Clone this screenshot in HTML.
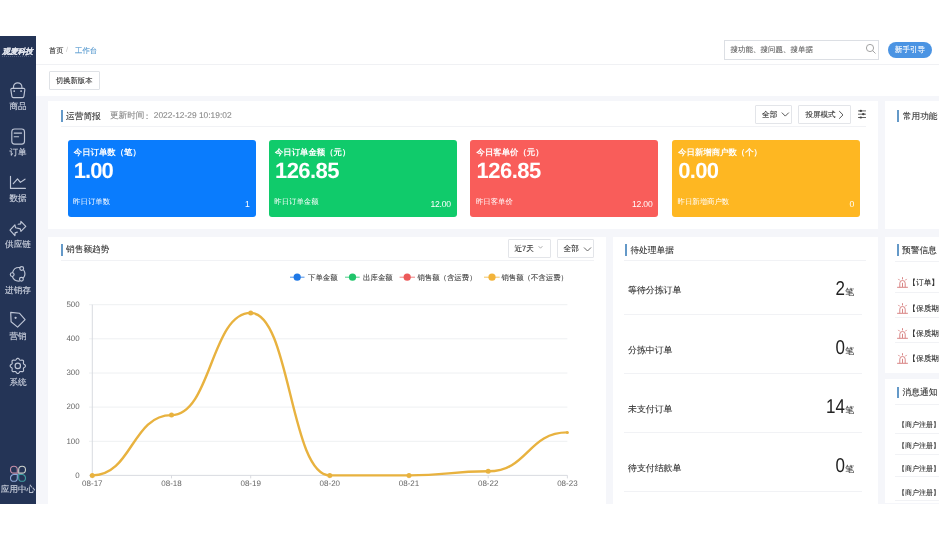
<!DOCTYPE html>
<html><head><meta charset="utf-8">
<style>
*{margin:0;padding:0;box-sizing:border-box;}
html,body{width:939px;height:540px;overflow:hidden;background:#fff;font-family:"Liberation Sans",sans-serif;color:#333;text-rendering:geometricPrecision;}
.a{position:absolute;}
.t{position:absolute;white-space:nowrap;line-height:1;-webkit-text-stroke:0.1px currentColor;}
#side{left:0;top:36px;width:36px;height:467.5px;background:#243456;}
#bg{left:36px;top:95.5px;width:903px;height:408px;background:#f5f6fa;}
.card{position:absolute;background:#fff;}
.bar{position:absolute;width:2.2px;background:#6499c8;}
.title{position:absolute;font-size:8.7px;color:#333;line-height:1;white-space:nowrap;-webkit-text-stroke:0.1px currentColor;}
.hl{position:absolute;height:1px;background:#f1f2f5;}
.stat{position:absolute;width:188px;height:77.9px;border-radius:3px;color:#fff;}
.stat .s1{position:absolute;left:6.3px;top:8px;font-size:8.4px;font-weight:bold;line-height:1;white-space:nowrap;}
.stat .s2{position:absolute;left:6.3px;top:20.6px;font-size:22px;letter-spacing:-0.95px;font-weight:bold;line-height:1;white-space:nowrap;}
.stat .s3{position:absolute;left:5.6px;top:58.7px;font-size:7.4px;line-height:1;white-space:nowrap;}
.stat .s4{position:absolute;right:5.8px;top:60.2px;font-size:8.6px;letter-spacing:-0.2px;line-height:1;white-space:nowrap;}
.sel{position:absolute;border:1px solid #e3e5e9;background:#fff;border-radius:1px;}
.nav{position:absolute;left:0;width:36px;text-align:center;color:#c9cfdc;font-size:8.6px;line-height:1;white-space:nowrap;-webkit-text-stroke:0.15px #c9cfdc;}
.navi{position:absolute;}
#wrap{position:absolute;left:0;top:0;width:939px;height:540px;filter:blur(0.4px);}
</style></head><body><div id="wrap">
<div id="side" class="a"></div>
<div id="bg" class="a"></div>

<!-- header -->
<div class="t" style="left:49px;top:46.8px;font-size:7.2px;color:#333;">首页</div><div class="t" style="left:66px;top:46.8px;font-size:7px;color:#ccc;">/</div><div class="t" style="left:75px;top:46.8px;font-size:7.4px;color:#5a9bd0;">工作台</div>
<div class="a" style="left:724px;top:40px;width:155px;height:20px;border:1px solid #dcdfe4;background:#fff;"></div>
<div class="t" style="left:730.6px;top:45.8px;font-size:7.5px;color:#666;">搜功能、搜问题、搜单据</div>
<svg class="a" style="left:865px;top:43px" width="12" height="12" viewBox="0 0 12 12"><circle cx="5" cy="5" r="3.6" fill="none" stroke="#999" stroke-width="0.9"/><line x1="7.6" y1="7.6" x2="10.5" y2="10.5" stroke="#999" stroke-width="0.9"/></svg>
<div class="a" style="left:888px;top:42px;width:44px;height:15.5px;border-radius:8px;background:#4b94e3;"></div>
<div class="t" style="left:894.8px;top:46.2px;font-size:7.6px;color:#fff;">新手引导</div>
<div class="hl" style="left:36px;top:64px;width:903px;background:#f0f1f4;"></div>
<div class="a" style="left:48.5px;top:71px;width:51.5px;height:19px;border:1px solid #dfe2e6;background:#fff;border-radius:1px;"></div>
<div class="t" style="left:55.8px;top:77.4px;font-size:7.35px;color:#333;">切换新版本</div>

<!-- card 1 -->
<div class="card" style="left:48.3px;top:101.3px;width:829.7px;height:128.2px;"></div>
<div class="bar" style="left:61px;top:110px;height:12px;"></div>
<div class="title" style="left:66px;top:111.5px;">运营简报</div>
<div class="t" style="left:110px;top:111.3px;font-size:8.6px;color:#888;">更新时间</div><div class="t" style="left:142.8px;top:112px;font-size:8.6px;color:#888;">：</div><div class="t" style="left:153.8px;top:111.3px;font-size:8.4px;color:#888;">2022-12-29 10:19:02</div>
<div class="hl" style="left:61px;top:126px;width:805px;"></div>
<div class="sel" style="left:755px;top:105.2px;width:37px;height:18.6px;"></div>
<div class="t" style="left:762px;top:111.3px;font-size:7.7px;color:#333;">全部</div>
<svg class="a" style="left:780.5px;top:111px" width="9" height="7" viewBox="0 0 9 7"><polyline points="0.8,1.6 4.3,5.1 7.8,1.6" fill="none" stroke="#444" stroke-width="0.9"/></svg>
<div class="sel" style="left:798px;top:105.2px;width:53.3px;height:18.6px;"></div>
<div class="t" style="left:805.5px;top:111.3px;font-size:7.5px;color:#333;">投屏模式</div>
<svg class="a" style="left:838px;top:110px" width="7" height="10" viewBox="0 0 7 10"><polyline points="1.2,1.1 5,4.9 1.2,8.7" fill="none" stroke="#444" stroke-width="0.9"/></svg>
<svg class="a" style="left:856px;top:108px" width="12" height="12" viewBox="0 0 12 12"><g stroke="#555" stroke-width="0.9"><line x1="2" y1="2.9" x2="10" y2="2.9"/><line x1="2" y1="6.2" x2="10" y2="6.2"/><line x1="2" y1="9.5" x2="10" y2="9.5"/></g><g fill="#444"><ellipse cx="4.8" cy="2.9" rx="1.3" ry="1.1"/><ellipse cx="7.3" cy="6.2" rx="1.3" ry="1.1"/><ellipse cx="4.8" cy="9.5" rx="1.3" ry="1.1"/></g></svg>

<div class="stat" style="left:67.5px;top:139.6px;background:#0a7cfd;">
 <div class="s1">今日订单数（笔）</div><div class="s2">1.00</div><div class="s3">昨日订单数</div><div class="s4">1</div></div>
<div class="stat" style="left:268.7px;top:139.6px;background:#10cb6b;">
 <div class="s1">今日订单金额（元）</div><div class="s2" style="letter-spacing:-0.55px">126.85</div><div class="s3">昨日订单金额</div><div class="s4">12.00</div></div>
<div class="stat" style="left:470.3px;top:139.6px;background:#f95d5a;">
 <div class="s1">今日客单价（元）</div><div class="s2" style="letter-spacing:-0.55px">126.85</div><div class="s3">昨日客单价</div><div class="s4">12.00</div></div>
<div class="stat" style="left:671.9px;top:139.6px;background:#feb722;">
 <div class="s1">今日新增商户数（个）</div><div class="s2" style="letter-spacing:-0.7px">0.00</div><div class="s3">昨日新增商户数</div><div class="s4">0</div></div>

<!-- right card 常用功能 -->
<div class="card" style="left:885px;top:101.3px;width:54px;height:128.2px;"></div>
<div class="bar" style="left:896.9px;top:110px;height:11.5px;"></div>
<div class="title" style="left:902.8px;top:111.5px;">常用功能</div>

<!-- chart card -->
<div class="card" style="left:48.3px;top:236.5px;width:558.2px;height:267px;"></div>
<div class="bar" style="left:61px;top:243.5px;height:12px;"></div>
<div class="title" style="left:66px;top:245px;">销售额趋势</div>
<div class="hl" style="left:61px;top:260px;width:533px;"></div>
<div class="sel" style="left:508.2px;top:239.3px;width:42.4px;height:18.3px;"></div>
<div class="t" style="left:514.5px;top:244.5px;font-size:7.6px;color:#333;">近7天</div>
<svg class="a" style="left:537px;top:244px" width="7" height="6" viewBox="0 0 7 6"><polyline points="1.6,2.2 3.5,4.2 5.4,2.2" fill="none" stroke="#999" stroke-width="0.8"/></svg>
<div class="sel" style="left:557.4px;top:239.3px;width:36.3px;height:18.5px;"></div>
<div class="t" style="left:563.6px;top:245.3px;font-size:7.6px;color:#333;">全部</div>
<svg class="a" style="left:583px;top:245.5px" width="9" height="7" viewBox="0 0 9 7"><polyline points="1,1.5 4.5,5 8,1.5" fill="none" stroke="#555" stroke-width="0.9"/></svg>

<svg class="a" style="left:0;top:0" width="939" height="540" viewBox="0 0 939 540">
 <g stroke="#eef0f2" stroke-width="1">
  <line x1="89" y1="304.7" x2="567.4" y2="304.7"/>
  <line x1="89" y1="338.8" x2="567.4" y2="338.8"/>
  <line x1="89" y1="373.0" x2="567.4" y2="373.0"/>
  <line x1="89" y1="407.1" x2="567.4" y2="407.1"/>
  <line x1="89" y1="441.3" x2="567.4" y2="441.3"/>
 </g>
 <line x1="92.3" y1="304.7" x2="92.3" y2="475.4" stroke="#d5d7dc" stroke-width="0.9"/>
 <line x1="89" y1="475.4" x2="567.4" y2="475.4" stroke="#d5d7dc" stroke-width="0.9"/>
 <g stroke="#d5d7dc" stroke-width="0.9">
  <line x1="92.3" y1="475.4" x2="92.3" y2="478.4"/>  <line x1="171.5" y1="475.4" x2="171.5" y2="478.4"/>  <line x1="250.7" y1="475.4" x2="250.7" y2="478.4"/>  <line x1="329.8" y1="475.4" x2="329.8" y2="478.4"/>  <line x1="409" y1="475.4" x2="409" y2="478.4"/>  <line x1="488.2" y1="475.4" x2="488.2" y2="478.4"/>  <line x1="567.4" y1="475.4" x2="567.4" y2="478.4"/>
 </g>
 <g font-family="Liberation Sans" font-size="7.9" fill="#666" text-anchor="end">
  <text x="79.6" y="306.9">500</text><text x="79.6" y="341.0">400</text><text x="79.6" y="375.2">300</text><text x="79.6" y="409.3">200</text><text x="79.6" y="443.5">100</text><text x="79.6" y="477.6">0</text>
 </g>
 <g font-family="Liberation Sans" font-size="8" fill="#666" text-anchor="middle">
  <text x="92.3" y="486.4">08-17</text><text x="171.5" y="486.4">08-18</text><text x="250.7" y="486.4">08-19</text><text x="329.8" y="486.4">08-20</text><text x="409" y="486.4">08-21</text><text x="488.2" y="486.4">08-22</text><text x="567.4" y="486.4">08-23</text>
 </g>
 <path d="M92.3,475.4 C131.9,475.4 131.9,415.1 171.5,415.1 C211.1,415.1 211.1,312.9 250.7,312.9 C290.2,312.9 290.2,475.4 329.8,475.4 C369.4,475.4 369.4,475.4 409.0,475.4 C448.6,475.4 448.6,471.3 488.2,471.3 C527.8,471.3 527.8,432.4 567.4,432.4" fill="none" stroke="#e8b23f" stroke-width="2.4"/>
 <g fill="#e8b23f">
  <circle cx="92.3" cy="475.4" r="2.5"/><circle cx="171.5" cy="415.1" r="2.5"/><circle cx="250.7" cy="312.9" r="2.5"/><circle cx="329.8" cy="475.4" r="2.5"/><circle cx="409" cy="475.4" r="2.5"/><circle cx="488.2" cy="471.3" r="2.5"/><circle cx="567.4" cy="432.4" r="1.5"/>
 </g>
 <!-- legend -->
 <g stroke-width="1">
  <line x1="290" y1="277.2" x2="304.5" y2="277.2" stroke="#4a90e8"/><circle cx="297.2" cy="277.2" r="3.6" fill="#1f78e6"/>
  <line x1="345" y1="277.2" x2="359.7" y2="277.2" stroke="#4ccf88"/><circle cx="352.5" cy="277.2" r="3.6" fill="#1fc46a"/>
  <line x1="399.6" y1="277.2" x2="415" y2="277.2" stroke="#ef8080"/><circle cx="407.2" cy="277.2" r="3.6" fill="#ec5a5a"/>
  <line x1="484" y1="277.2" x2="499.7" y2="277.2" stroke="#f3c462"/><circle cx="492" cy="277.2" r="3.6" fill="#f2b33a"/>
 </g>
</svg>
<div class="t" style="left:308.0px;top:273.7px;font-size:7.4px;color:#444;">下单金额</div>
<div class="t" style="left:363.09999999999997px;top:273.7px;font-size:7.4px;color:#444;">出库金额</div>
<div class="t" style="left:417.4px;top:273.7px;font-size:7.4px;color:#444;">销售额（含运费）</div>
<div class="t" style="left:501.4px;top:273.7px;font-size:7.4px;color:#444;">销售额（不含运费）</div>

<!-- 待处理单据 -->
<div class="card" style="left:612.6px;top:236.5px;width:265.4px;height:267px;"></div>
<div class="bar" style="left:625px;top:244px;height:11.5px;"></div>
<div class="title" style="left:630.4px;top:245.5px;">待处理单据</div>
<div class="hl" style="left:624px;top:260px;width:242px;"></div>
<div class="t" style="left:628px;top:286.3px;font-size:8.9px;color:#333;">等待分拣订单</div>
<div class="t" style="left:785px;width:60px;text-align:right;top:278.9px;font-size:20px;color:#222;-webkit-text-stroke:0;transform:scaleX(0.85);transform-origin:right center;">2</div><div class="t" style="left:845.2px;top:287.9px;font-size:8.9px;color:#333;">笔</div>
<div class="hl" style="left:624px;top:313.5px;width:238px;"></div>
<div class="t" style="left:628px;top:345.8px;font-size:8.9px;color:#333;">分拣中订单</div>
<div class="t" style="left:785px;width:60px;text-align:right;top:337.9px;font-size:20px;color:#222;-webkit-text-stroke:0;transform:scaleX(0.85);transform-origin:right center;">0</div><div class="t" style="left:845.2px;top:346.9px;font-size:8.9px;color:#333;">笔</div>
<div class="hl" style="left:624px;top:373px;width:238px;"></div>
<div class="t" style="left:628px;top:405.3px;font-size:8.9px;color:#333;">未支付订单</div>
<div class="t" style="left:785px;width:60px;text-align:right;top:396.9px;font-size:20px;color:#222;-webkit-text-stroke:0;transform:scaleX(0.85);transform-origin:right center;">14</div><div class="t" style="left:845.2px;top:405.9px;font-size:8.9px;color:#333;">笔</div>
<div class="hl" style="left:624px;top:431.5px;width:238px;"></div>
<div class="t" style="left:628px;top:463.8px;font-size:8.9px;color:#333;">待支付结款单</div>
<div class="t" style="left:785px;width:60px;text-align:right;top:455.9px;font-size:20px;color:#222;-webkit-text-stroke:0;transform:scaleX(0.85);transform-origin:right center;">0</div><div class="t" style="left:845.2px;top:464.9px;font-size:8.9px;color:#333;">笔</div>
<div class="hl" style="left:624px;top:490.5px;width:238px;"></div>

<!-- 预警信息 -->
<div class="card" style="left:885px;top:236.5px;width:54px;height:136.3px;"></div>
<div class="bar" style="left:896.9px;top:244px;height:11.5px;"></div>
<div class="title" style="left:902px;top:245.5px;">预警信息</div>
<div class="hl" style="left:895px;top:260.5px;width:44px;"></div>
<svg class="a" style="left:897.3px;top:277.1px" width="11" height="11" viewBox="0 0 11 11"><g fill="none" stroke="#d98585" stroke-width="1" stroke-linecap="round"><path d="M2.8,10 V6.2 A2.7,2.7 0 0 1 8.2,6.2 V10 M0.5,10.3 H10.5 M5.5,0.6 V2 M1.6,2.2 L2.5,3.1 M9.4,2.2 L8.5,3.1 M5.5,6.2 V9.6"/></g></svg>
<div class="t" style="left:908.3px;top:279px;font-size:7.7px;color:#333;">【订单】 </div>
<div class="hl" style="left:895px;top:291.5px;width:44px;"></div>
<svg class="a" style="left:897.3px;top:302.6px" width="11" height="11" viewBox="0 0 11 11"><g fill="none" stroke="#d98585" stroke-width="1" stroke-linecap="round"><path d="M2.8,10 V6.2 A2.7,2.7 0 0 1 8.2,6.2 V10 M0.5,10.3 H10.5 M5.5,0.6 V2 M1.6,2.2 L2.5,3.1 M9.4,2.2 L8.5,3.1 M5.5,6.2 V9.6"/></g></svg>
<div class="t" style="left:908.3px;top:304.5px;font-size:7.7px;color:#333;">【保质期</div>
<div class="hl" style="left:895px;top:317.0px;width:44px;"></div>
<svg class="a" style="left:897.3px;top:327.6px" width="11" height="11" viewBox="0 0 11 11"><g fill="none" stroke="#d98585" stroke-width="1" stroke-linecap="round"><path d="M2.8,10 V6.2 A2.7,2.7 0 0 1 8.2,6.2 V10 M0.5,10.3 H10.5 M5.5,0.6 V2 M1.6,2.2 L2.5,3.1 M9.4,2.2 L8.5,3.1 M5.5,6.2 V9.6"/></g></svg>
<div class="t" style="left:908.3px;top:329.5px;font-size:7.7px;color:#333;">【保质期</div>
<div class="hl" style="left:895px;top:342.0px;width:44px;"></div>
<svg class="a" style="left:897.3px;top:352.6px" width="11" height="11" viewBox="0 0 11 11"><g fill="none" stroke="#d98585" stroke-width="1" stroke-linecap="round"><path d="M2.8,10 V6.2 A2.7,2.7 0 0 1 8.2,6.2 V10 M0.5,10.3 H10.5 M5.5,0.6 V2 M1.6,2.2 L2.5,3.1 M9.4,2.2 L8.5,3.1 M5.5,6.2 V9.6"/></g></svg>
<div class="t" style="left:908.3px;top:354.5px;font-size:7.7px;color:#333;">【保质期</div>

<!-- 消息通知 -->
<div class="card" style="left:885px;top:379.4px;width:54px;height:124.1px;"></div>
<div class="bar" style="left:896.9px;top:386.5px;height:11.5px;"></div>
<div class="title" style="left:902.6px;top:388px;">消息通知</div>
<div class="hl" style="left:895px;top:403.5px;width:44px;"></div>
<div class="t" style="left:898px;top:422.0px;font-size:7px;color:#333;">【商户注册】</div>
<div class="hl" style="left:895px;top:432.7px;width:44px;"></div>
<div class="t" style="left:898px;top:443.3px;font-size:7px;color:#333;">【商户注册】</div>
<div class="hl" style="left:895px;top:454px;width:44px;"></div>
<div class="t" style="left:898px;top:465.5px;font-size:7px;color:#333;">【商户注册】</div>
<div class="hl" style="left:895px;top:476.2px;width:44px;"></div>
<div class="t" style="left:898px;top:489.5px;font-size:7px;color:#333;">【商户注册】</div>
<div class="hl" style="left:895px;top:500.2px;width:44px;"></div>

<!-- sidebar -->
<div class="t" style="left:2.3px;top:48.2px;font-size:7.7px;color:#e4e7ef;font-style:italic;font-weight:bold;">观麦科技</div>
<div class="a" style="left:2px;top:56.3px;width:30px;height:0.8px;background:repeating-linear-gradient(90deg,#9aa3b8 0 1.2px,transparent 1.2px 2px);opacity:0.35;"></div>
<svg class="a" style="left:0;top:0" width="36" height="540" viewBox="0 0 36 540">
 <g fill="none" stroke="#bfc6d6" stroke-width="1.15" stroke-linecap="round" stroke-linejoin="round">
  <path d="M13.5,88 V87 A4.2,4.2 0 0 1 21.9,87 V88"/>
  <path d="M12,88.4 H23.6 Q25,88.4 24.8,89.8 L23.9,96.3 Q23.7,97.6 22.4,97.6 H13.4 Q12.1,97.6 11.9,96.3 L10.9,89.8 Q10.7,88.4 12,88.4 Z"/>
  <rect x="11.8" y="129" width="12.7" height="15.1" rx="2.8"/>
  <path d="M14.2,133.1 H21.6 M14.2,136.7 H18.6"/>
  <path d="M10.5,176.3 V188.4 H25.4"/>
  <path d="M13.3,183.7 L17.5,178.8 L20.4,182.4 L25,179.2"/>
  <path d="M18.2,224.2 L20.7,223.9 L20.9,221.3 L25.8,226.4 L20.9,231.3 L20.3,228.9 L15.6,227.8 L14.9,224.9 L10,230.2 L14.9,235.6 L15.1,232.9 L17.3,232.1"/>
  <path d="M19.8,267.6 A6.8,6.8 0 0 0 12.6,272.4"/>
  <path d="M12.4,276.8 A6.8,6.8 0 0 0 19.5,281"/>
  <path d="M23.4,278 A6.8,6.8 0 0 0 23.6,270"/>
  <circle cx="21.7" cy="268.5" r="1.9"/>
  <circle cx="12.2" cy="274.6" r="1.9"/>
  <circle cx="21.4" cy="279.2" r="1.9"/>
  <path d="M10.7,312.4 L19.6,313.3 L25.1,319.6 L17.6,327.1 L11.1,321.8 Z"/>
  <path d="M25.45,365.90 L25.33,366.39 L25.01,366.85 L24.57,367.25 L24.10,367.59 L23.72,367.91 L23.48,368.25 L23.41,368.66 L23.45,369.16 L23.54,369.73 L23.57,370.33 L23.48,370.88 L23.21,371.31 L22.78,371.58 L22.23,371.67 L21.63,371.64 L21.06,371.55 L20.56,371.51 L20.15,371.58 L19.81,371.82 L19.49,372.20 L19.15,372.67 L18.75,373.11 L18.29,373.43 L17.80,373.55 L17.31,373.43 L16.85,373.11 L16.45,372.67 L16.11,372.20 L15.79,371.82 L15.45,371.58 L15.04,371.51 L14.54,371.55 L13.97,371.64 L13.37,371.67 L12.82,371.58 L12.39,371.31 L12.12,370.88 L12.03,370.33 L12.06,369.73 L12.15,369.16 L12.19,368.66 L12.12,368.25 L11.88,367.91 L11.50,367.59 L11.03,367.25 L10.59,366.85 L10.27,366.39 L10.15,365.90 L10.27,365.41 L10.59,364.95 L11.03,364.55 L11.50,364.21 L11.88,363.89 L12.12,363.55 L12.19,363.14 L12.15,362.64 L12.06,362.07 L12.03,361.47 L12.12,360.92 L12.39,360.49 L12.82,360.22 L13.37,360.13 L13.97,360.16 L14.54,360.25 L15.04,360.29 L15.45,360.22 L15.79,359.98 L16.11,359.60 L16.45,359.13 L16.85,358.69 L17.31,358.37 L17.80,358.25 L18.29,358.37 L18.75,358.69 L19.15,359.13 L19.49,359.60 L19.81,359.98 L20.15,360.22 L20.56,360.29 L21.06,360.25 L21.63,360.16 L22.23,360.13 L22.78,360.22 L23.21,360.49 L23.48,360.92 L23.57,361.47 L23.54,362.07 L23.45,362.64 L23.41,363.14 L23.48,363.55 L23.72,363.89 L24.10,364.21 L24.57,364.55 L25.01,364.95 L25.33,365.41 L25.45,365.90Z"/>
  <circle cx="17.8" cy="365.9" r="2.7"/>
 </g>
 <g fill="#bfc6d6"><circle cx="14.2" cy="91.1" r="0.95"/><circle cx="21.1" cy="91.1" r="0.95"/><circle cx="15.6" cy="317.8" r="1.15"/></g>
 <g fill="none" stroke-width="1.1">
  <path d="M17.3,469.7 V473.1 H13.9 A3.4,3.4 0 1 1 17.3,469.7 Z" stroke="#c58fa8"/>
  <path d="M18.7,469.7 V473.1 H22.1 A3.4,3.4 0 1 0 18.7,469.7 Z" stroke="#cdd2cc"/>
  <path d="M17.3,477.9 V474.5 H13.9 A3.4,3.4 0 1 0 17.3,477.9 Z" stroke="#8ea8d8"/>
  <path d="M18.7,477.9 V474.5 H22.1 A3.4,3.4 0 1 1 18.7,477.9 Z" stroke="#3f9ca0"/>
 </g>
</svg>
<div class="nav" style="top:101.8px;">商品</div>
<div class="nav" style="top:147.8px;">订单</div>
<div class="nav" style="top:193.8px;">数据</div>
<div class="nav" style="top:239.8px;">供应链</div>
<div class="nav" style="top:285.8px;">进销存</div>
<div class="nav" style="top:331.8px;">营销</div>
<div class="nav" style="top:377.8px;">系统</div>
<div class="nav" style="top:485px;left:-1px;width:38px;font-size:8.6px;">应用中心</div>
</div></body></html>
